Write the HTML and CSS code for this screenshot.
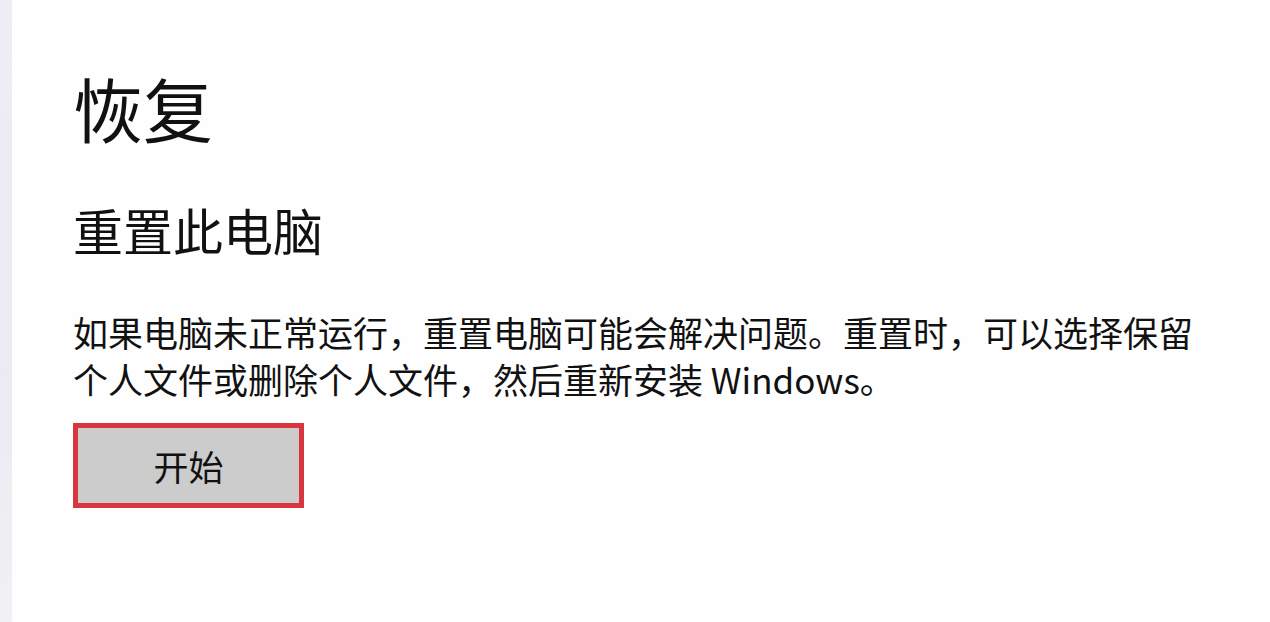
FILE: index.html
```html
<!DOCTYPE html>
<html lang="zh-CN">
<head>
<meta charset="utf-8">
<link rel="stylesheet" href="styles.css">
</head>
<body>
<div class="page">
  <div class="edge"></div>
  <main class="main">
    <h1 class="title">恢复</h1>
    <h2 class="subtitle">重置此电脑</h2>
    <p class="desc">如果电脑未正常运行，重置电脑可能会解决问题。重置时，可以选择保留<br>个人文件或删除个人文件，然后重新安装 Windows。</p>
    <div class="btn-wrap"><button class="btn">开始</button></div>
  </main>
</div>
</body>
</html>
```
FILE: styles.css
```css
html, body {
  margin: 0;
  padding: 0;
  background: #fefefe;
  width: 1270px;
  height: 622px;
  overflow: hidden;
}
.page {
  display: flex;
  height: 622px;
  font-family: "Noto Sans CJK SC", "Noto Sans", sans-serif;
  color: #111;
}
.edge {
  width: 12px;
  flex: none;
  background: linear-gradient(to bottom, #eeedf4 0%, #eceaf3 60%, #f1f1f3 100%);
}
.main {
  padding-left: 61px;
  padding-top: 66px;
}
.title {
  margin: 0;
  font-size: 70px;
  font-weight: 400;
  line-height: 84px;
}
.subtitle {
  margin: 49px 0 0;
  font-size: 50px;
  font-weight: 400;
  line-height: 60px;
}
.desc {
  margin: 49px 0 0;
  font-size: 35px;
  line-height: 47px;
  letter-spacing: 0;
}
.btn-wrap {
  margin-top: 21px;
}
.btn {
  width: 231px;
  height: 85px;
  border: 5px solid #d7363f;
  background: #cccccc;
  font-family: "Noto Sans CJK SC", sans-serif;
  font-size: 35px;
  color: #111;
  padding: 0;
}
```
